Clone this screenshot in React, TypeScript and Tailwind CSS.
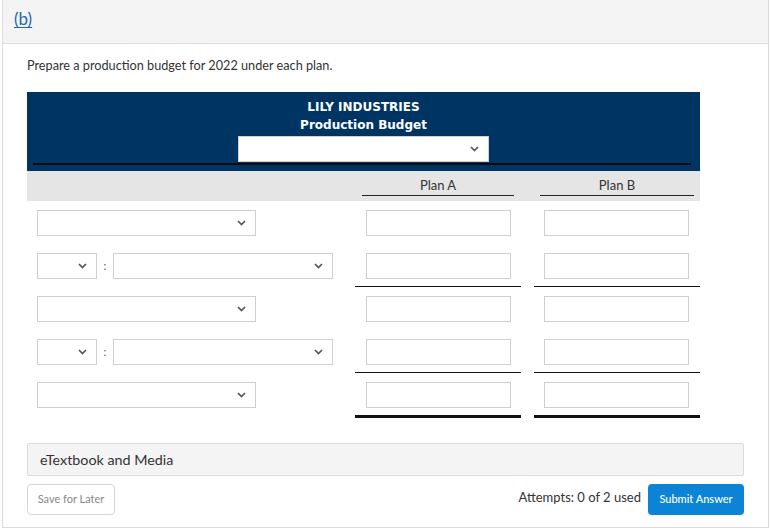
import React from "react";

const lato = { fontFamily: "Lato, 'Open Sans', sans-serif" };

function Chevron() {
  return (
    <svg width="9" height="6" viewBox="0 0 9 6" className="shrink-0">
      <path d="M1 1l3.5 3.5L8 1" fill="none" stroke="#555" strokeWidth="1.7" />
    </svg>
  );
}

function Select({ w }: { w: string }) {
  return (
    <div className={`${w} h-[26px] bg-white border border-[#cfcfcf] flex items-center justify-end pr-[9px]`}>
      <Chevron />
    </div>
  );
}

function Input({ ml }: { ml: string }) {
  return <div className={`w-[145px] h-[26px] bg-white border border-[#cfcfcf] ${ml}`} />;
}

type Row = { kind: "single" | "pair"; line: "none" | "thin" | "thick" };

const rows: Row[] = [
  { kind: "single", line: "none" },
  { kind: "pair", line: "thin" },
  { kind: "single", line: "none" },
  { kind: "pair", line: "thin" },
  { kind: "single", line: "thick" },
];

export default function App() {
  return (
    <div className="w-[771px] h-[530px] bg-white" style={lato}>
      <div className="mx-[2px] border-x border-b border-[#dcdcdc]">
        {/* Header */}
        <div className="h-[44px] bg-[#f4f4f4] border-b border-[#dcdcdc] pl-[11px] pt-[6px]">
          <span className="text-[17px] text-[#2069ad] underline underline-offset-2">(b)</span>
        </div>

        <div className="px-[24px] pt-[12px] pb-[12px]">
          <p className="text-[12.7px] leading-[18px] text-[#333]">Prepare a production budget for 2022 under each plan.</p>

          {/* Budget table */}
          <div className="w-[673px] mt-[18px]">
            <div className="h-[79px] bg-[#003463] pt-[6px] flex flex-col items-center relative">
              <div
                className="text-white font-bold text-[12px] leading-[18px] text-center"
                style={{ fontFamily: "Tahoma, 'DejaVu Sans', Verdana, sans-serif" }}
              >
                <div>LILY INDUSTRIES</div>
                <div>Production Budget</div>
              </div>
              <div className="mt-[2px]">
                <Select w="w-[251px]" />
              </div>
              <div className="absolute left-[6px] right-[9px] bottom-[6px] h-[2px] bg-[#0b0b0b]" />
            </div>

            <div className="h-[30px] bg-[#e5e5e5] flex">
              <div className="w-[328px]" />
              <div className="w-[166px] px-[7px] pt-[6px]">
                <div className="text-[13px] leading-[17px] text-[#333] text-center border-b border-[#222] pb-[1px]">Plan A</div>
              </div>
              <div className="w-[13px]" />
              <div className="w-[166px] px-[6px] pt-[6px]">
                <div className="text-[13px] leading-[17px] text-[#333] text-center border-b border-[#222] pb-[1px]">Plan B</div>
              </div>
            </div>

            {rows.map((r, i) => {
              const line =
                r.line === "thin"
                  ? "border-b border-[#111] pb-[7px]"
                  : r.line === "thick"
                    ? "border-b-[3px] border-[#111] pb-[7px]"
                    : "pb-[8px]";
              return (
                <div key={i} className="flex">
                  <div className="w-[328px] pl-[10px] pt-[9px]">
                    {r.kind === "single" ? (
                      <Select w="w-[219px]" />
                    ) : (
                      <div className="flex items-center">
                        <Select w="w-[60px]" />
                        <span className="w-[16px] text-center text-[11px] text-[#555]">:</span>
                        <Select w="w-[220px]" />
                      </div>
                    )}
                  </div>
                  <div className={`w-[166px] pt-[9px] ${line}`}>
                    <Input ml="ml-[11px]" />
                  </div>
                  <div className="w-[13px]" />
                  <div className={`w-[166px] pt-[9px] ${line}`}>
                    <Input ml="ml-[10px]" />
                  </div>
                </div>
              );
            })}
          </div>

          {/* eTextbook */}
          <div className="mt-[25px] h-[33px] bg-[#f4f4f4] border border-[#dcdcdc] rounded-[2px] flex items-center pl-[12px]">
            <span className="text-[14.3px] text-[#333]">eTextbook and Media</span>
          </div>

          <div className="mt-[8px] flex items-center justify-between">
            <div className="w-[88px] h-[31px] border border-[#d6d6d6] rounded-[4px] flex items-center justify-center text-[11px] text-[#888]">
              Save for Later
            </div>
            <div className="flex items-center">
              <span className="text-[13px] text-[#333] mr-[7px] -mt-[4px]">Attempts: 0 of 2 used</span>
              <div className="w-[96px] h-[31px] bg-[#0b84d6] rounded-[4px] flex items-center justify-center text-[11px] text-white font-medium">
                Submit Answer
              </div>
            </div>
          </div>
        </div>
      </div>
    </div>
  );
}
